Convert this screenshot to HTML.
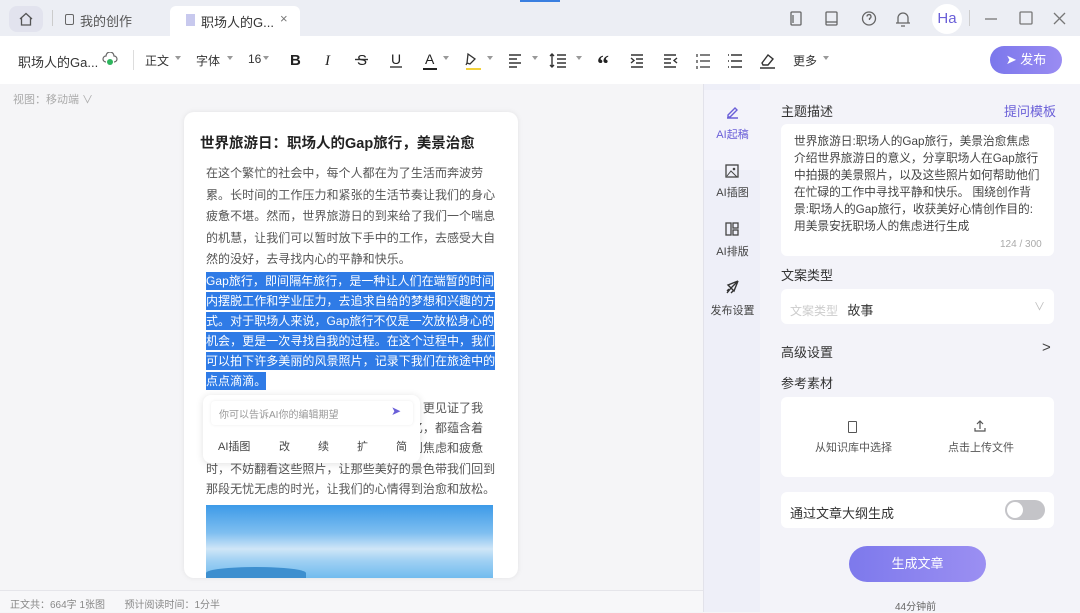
<!DOCTYPE html>
<html><head><meta charset="utf-8"><style>
*{margin:0;padding:0;box-sizing:border-box}
body{width:1080px;height:612px;overflow:hidden;font-family:"Liberation Sans","Noto Sans CJK SC",sans-serif;background:#f5f5f7;position:relative;color:#333}
.a{position:absolute}
.tabs{left:0;top:0;width:1080px;height:36px;background:#eceef4}
.tb{left:0;top:36px;width:1080px;height:48px;background:#fff}
.tb span{position:absolute;top:16px;font-size:12px;color:#333}
.dd{position:absolute;top:20px;width:0;height:0;border-left:3.5px solid transparent;border-right:3.5px solid transparent;border-top:4px solid #999}
.card{left:184px;top:112px;width:334px;height:466px;background:#fff;border-radius:10px;box-shadow:0 0 6px rgba(0,0,0,.08);overflow:hidden}
.p{position:absolute;left:22px;font-size:12px;color:#555;line-height:21.6px;letter-spacing:.05px;white-space:nowrap}
.sel span{background:#2f7be6;color:#fff;padding:2px 0}
.rside{left:703px;top:84px;width:57px;height:528px;background:#eeeff8;border-left:1px solid #e2e2ea}
.rp{left:760px;top:84px;width:320px;height:528px;background:#f3f3f9}
.box{background:#fff;border-radius:6px;position:absolute}
.lbl{position:absolute;font-size:13px;color:#333}
.ic{position:absolute;font-size:11px;color:#444;text-align:center;width:57px}
</style></head><body>
<div class="a tabs">
 <div class="a" style="left:9px;top:6px;width:34px;height:26px;background:#e2e3ee;border-radius:8px"></div>
 <svg class="a" style="left:18px;top:12px" width="16" height="14" viewBox="0 0 16 14"><path d="M2 7L8 1.5 14 7M3.5 6v7h9V6" fill="none" stroke="#555" stroke-width="1.3"/></svg>
 <div class="a" style="left:52px;top:10px;width:1px;height:16px;background:#ccc"></div>
 <div class="a" style="left:65px;top:14px;width:9px;height:11px;border:1.3px solid #666;border-radius:2px"></div>
 <div class="a" style="left:80px;top:11px;font-size:13px;color:#555">我的创作</div>
 <div class="a" style="left:170px;top:6px;width:130px;height:30px;background:#fff;border-radius:6px 6px 0 0"></div>
 <div class="a" style="left:186px;top:14px;width:9px;height:12px;background:#c8c9ee"></div>
 <div class="a" style="left:201px;top:12px;font-size:13px;color:#333">职场人的G...</div>
 <div class="a" style="left:280px;top:11px;font-size:13px;color:#777">×</div>
 <div class="a" style="left:520px;top:0;width:40px;height:2px;background:#3a7fe0"></div>
 <svg class="a" style="left:788px;top:10px" width="280" height="18" viewBox="0 0 280 18">
  <g fill="none" stroke="#666" stroke-width="1.3">
   <rect x="3" y="2" width="10" height="13" rx="1"/><path d="M5 5v8"/>
   <rect x="38" y="2" width="11" height="13" rx="1"/><path d="M38 12h11"/>
   <circle cx="81" cy="8.5" r="6.5"/><path d="M79 6.5a2 2 0 1 1 2.5 2v1.5"/>
   <path d="M110 13V8a5 5 0 0 1 10 0v5zM108 13h14M113 16h4"/>
   <path d="M197 9h12" stroke="#777"/><rect x="232" y="2" width="12" height="12" rx="1" stroke="#777"/><path d="M266 3l11 11M277 3l-11 11" stroke="#777"/>
  </g></svg>
 <div class="a" style="left:932px;top:4px;width:30px;height:30px;background:#fff;border-radius:50%;font-size:15px;color:#6a5fd8;text-align:center;line-height:30px">Ha</div>
 <div class="a" style="top:10px;width:1px;height:16px;background:#ccc;left:969px"></div>
</div>
<div class="a tb">
 <span style="left:18px;font-size:13px">职场人的Ga...</span>
 <svg class="a" style="left:102px;top:16px" width="16" height="14" viewBox="0 0 16 14"><path d="M4 10a3 3 0 0 1 0-6 4 4 0 0 1 8 0 3 3 0 0 1 0 6" fill="none" stroke="#666" stroke-width="1.2"/><circle cx="8" cy="10" r="3" fill="#2db55d"/></svg>
 <div class="a" style="left:133px;top:14px;width:1px;height:20px;background:#ddd"></div>
 <span style="left:145px">正文</span><i class="dd" style="left:175px"></i>
 <span style="left:196px">字体</span><i class="dd" style="left:227px"></i>
 <span style="left:248px">16</span><i class="dd" style="left:263px"></i>
 <svg class="a" style="left:0;top:0" width="860" height="48" viewBox="0 0 860 48" fill="none" stroke="#333" stroke-width="1.4">
  <text x="290" y="29" font-size="15" font-weight="bold" fill="#222" stroke="none" font-family="Liberation Sans">B</text>
  <text x="325" y="29" font-size="15" font-style="italic" fill="#222" stroke="none" font-family="Liberation Serif">I</text>
  <text x="357" y="29" font-size="15" fill="#222" stroke="none" font-family="Liberation Sans">S</text><path d="M355 23.5h13"/>
  <text x="391" y="28" font-size="14" fill="#222" stroke="none" font-family="Liberation Sans">U</text><path d="M390 31h12"/>
  <text x="425" y="28" font-size="14" fill="#222" stroke="none" font-family="Liberation Sans">A</text><path d="M423 33h14" stroke="#222" stroke-width="2"/>
  <path d="M468 18l7 5-5 5-3-1zM467 27l-1 2" stroke-width="1.3"/><path d="M466 33h15" stroke="#f2d13a" stroke-width="2"/>
  <path d="M509 19h12M509 23h8M509 27h12M509 31h8"/>
  <path d="M552 18v13M550 20l2-2 2 2M550 29l2 2 2-2M557 19h9M557 23h9M557 27h9M557 31h9"/>
  <text x="597" y="36" font-size="24" font-weight="bold" fill="#222" stroke="none" font-family="Liberation Serif">“</text>
  <path d="M631 19h12M636 23h7M636 27h7M631 31h12M631 22l3 2.5-3 2.5"/>
  <path d="M664 19h12M664 23h7M664 27h7M664 31h12M677 22l-3 2.5 3 2.5"/>
  <path d="M700 19h10M700 25h10M700 31h10M697 18v3M697 24v3M697 30v3" stroke-width="1.2"/>
  <path d="M731 19h11M731 25h11M731 31h11M728 19h1M728 25h1M728 31h1"/>
  <path d="M762 27l6-8 5 4-5 6h-5zM760 32h15"/>
 </svg>
 <i class="dd" style="left:443px"></i><i class="dd" style="left:487px"></i><i class="dd" style="left:532px"></i><i class="dd" style="left:576px"></i>
 <span style="left:793px">更多</span><i class="dd" style="left:823px"></i>
 <div class="a" style="left:990px;top:10px;width:72px;height:28px;border-radius:14px;background:linear-gradient(90deg,#7b77ec,#9a8cf2);color:#fff;font-size:13px;line-height:28px;text-align:center">➤ 发布</div>
</div>
<div class="a" style="left:13px;top:91px;font-size:11px;color:#aaa">视图：移动端 ∨</div>
<div class="a card">
 <div class="a" style="left:16px;top:20px;font-size:14.5px;font-weight:bold;color:#222">世界旅游日：职场人的Gap旅行，美景治愈</div>
 <div class="p" style="top:51px">在这个繁忙的社会中，每个人都在为了生活而奔波劳<br>累。长时间的工作压力和紧张的生活节奏让我们的身心<br>疲惫不堪。然而，世界旅游日的到来给了我们一个喘息<br>的机慧，让我们可以暂时放下手中的工作，去感受大自<br>然的没好，去寻找内心的平静和快乐。</div>
 <div class="p sel" style="top:159px;line-height:20px"><span>Gap旅行，即间隔年旅行，是一种让人们在端暂的时间</span><br><span>内摆脱工作和学业压力，去追求自给的梦想和兴趣的方</span><br><span>式。对于职场人来说，Gap旅行不仅是一次放松身心的</span><br><span>机会，更是一次寻找自我的过程。在这个过程中，我们</span><br><span>可以拍下许多美丽的风景照片，记录下我们在旅途中的</span><br><span>点点滴滴。</span></div>
 <div class="p" style="top:286px;line-height:20.2px">旅行中拍下的美景照片，不仅仅是风景，更见证了我<br>们的成长和变化。每一张照片背后的回忆，都蕴含着<br>我们对生活的感悟。当我们在工作中感到焦虑和疲惫<br>时，不妨翻看这些照片，让那些美好的景色带我们回到<br>那段无忧无虑的时光，让我们的心情得到治愈和放松。</div>
 <div class="a" style="left:22px;top:393px;width:287px;height:80px;background:linear-gradient(180deg,#3d9ae8 0%,#7fbff0 35%,#cfe6f7 55%,#9fd0f3 70%,#5fb3ec 100%)"></div>
 <div class="a" style="left:22px;top:455px;width:100px;height:12px;background:#3d8fcf;border-radius:50% 50% 0 0"></div>
</div>
<div class="a" style="left:203px;top:395px;width:217px;height:68px;background:#fff;border-radius:8px;box-shadow:0 1px 8px rgba(0,0,0,.12)">
 <div class="a" style="left:8px;top:6px;width:202px;height:24px;border-radius:4px;background:#fff;box-shadow:0 0 3px rgba(0,0,0,.08)"></div>
 <div class="a" style="left:16px;top:11px;font-size:10px;color:#999">你可以告诉AI你的编辑期望</div>
 <div class="a" style="left:188px;top:9px;font-size:12px;color:#6a5fd8">➤</div>
 <div class="a" style="left:15px;top:43px;font-size:11px;color:#444">AI插图</div>
 <div class="a" style="left:76px;top:43px;font-size:11px;color:#444">改</div>
 <div class="a" style="left:115px;top:43px;font-size:11px;color:#444">续</div>
 <div class="a" style="left:154px;top:43px;font-size:11px;color:#444">扩</div>
 <div class="a" style="left:193px;top:43px;font-size:11px;color:#444">简</div>
</div>
<div class="a" style="left:0;top:590px;width:703px;height:22px;background:#f7f7f9;border-top:1px solid #e5e5ea"></div>
<div class="a" style="left:10px;top:596px;font-size:10px;color:#888">正文共：664字 1张图 &nbsp; &nbsp; &nbsp; 预计阅读时间：1分半</div>
<div class="a rside">
 <div class="a" style="left:0;top:6px;width:56px;height:80px;background:#f3f3fa"></div>
 <svg class="a" style="left:21px;top:21px" width="14" height="14" fill="none" stroke="#6a5fd8" stroke-width="1.4"><path d="M3 10l7-7 2 2-7 7H3zM2 13h11"/></svg>
 <div class="ic" style="top:42px;color:#6a5fd8">AI起稿</div>
 <svg class="a" style="left:21px;top:80px" width="14" height="14"><rect x="1" y="1" width="12" height="12" fill="none" stroke="#444" stroke-width="1.3"/><path d="M2 12l4-5 6 6" fill="none" stroke="#444"/><circle cx="9" cy="5" r="1.3" fill="#444"/></svg>
 <div class="ic" style="top:100px">AI插图</div>
 <svg class="a" style="left:21px;top:138px" width="14" height="14" fill="none" stroke="#444" stroke-width="1.3"><rect x="1" y="1" width="5" height="12"/><rect x="8" y="1" width="5" height="5"/><rect x="8" y="8" width="5" height="5"/></svg>
 <div class="ic" style="top:159px">AI排版</div>
 <svg class="a" style="left:21px;top:196px" width="14" height="14" fill="none" stroke="#333" stroke-width="1.4"><path d="M13 1L3 5l3 3zM13 1l-4 10-3-3zM6 8l-4 5M4 9l-2 2M8 11l-2 2"/></svg>
 <div class="ic" style="top:218px">发布设置</div>
</div>
<div class="a rp">
 <div class="lbl" style="left:21px;top:17px">主题描述</div>
 <div class="lbl" style="left:244px;top:17px;color:#6a5fd8">提问模板</div>
 <div class="box" style="left:21px;top:40px;width:273px;height:132px"></div>
 <div class="a" style="left:34px;top:49px;font-size:11.7px;line-height:17px;color:#444;white-space:nowrap">世界旅游日:职场人的Gap旅行，美景治愈焦虑<br>介绍世界旅游日的意义，分享职场人在Gap旅行<br>中拍摄的美景照片，以及这些照片如何帮助他们<br>在忙碌的工作中寻找平静和快乐。 围绕创作背<br>景:职场人的Gap旅行，收获美好心情创作目的:<br>用美景安抚职场人的焦虑进行生成</div>
 <div class="a" style="left:240px;top:155px;font-size:10px;color:#aaa">124 / 300</div>
 <div class="lbl" style="left:21px;top:181px">文案类型</div>
 <div class="box" style="left:21px;top:205px;width:273px;height:35px"></div>
 <div class="a" style="left:30px;top:216px;font-size:12px;color:#ccc">文案类型 <span style="color:#333;font-size:13px;margin-left:6px">故事</span></div>
 <div class="a" style="left:274px;top:214px;font-size:11px;color:#bbb">∨</div>
 <div class="lbl" style="left:21px;top:258px">高级设置</div>
 <div class="a" style="left:282px;top:255px;font-size:15px;color:#444">&gt;</div>
 <div class="lbl" style="left:21px;top:289px">参考素材</div>
 <div class="box" style="left:21px;top:313px;width:273px;height:80px"></div>
 <div class="a" style="left:88px;top:337px;width:9px;height:12px;border:1.2px solid #555;border-radius:1px"></div>
 <div class="a" style="left:55px;top:355px;font-size:11px;color:#555">从知识库中选择</div>
 <svg class="a" style="left:214px;top:336px" width="12" height="12" fill="none" stroke="#555" stroke-width="1.2"><path d="M6 9V1M3 4l3-3 3 3M1 8v3h10V8"/></svg>
 <div class="a" style="left:188px;top:355px;font-size:11px;color:#555">点击上传文件</div>
 <div class="box" style="left:21px;top:408px;width:273px;height:36px"></div>
 <div class="a" style="left:30px;top:419px;font-size:13px;color:#333">通过文章大纲生成</div>
 <div class="a" style="left:245px;top:416px;width:40px;height:20px;border-radius:10px;background:#c4c4c8"></div>
 <div class="a" style="left:247px;top:418px;width:16px;height:16px;border-radius:50%;background:#fff"></div>
 <div class="a" style="left:89px;top:462px;width:137px;height:36px;border-radius:18px;background:linear-gradient(90deg,#7d79ec,#9b8ff2);color:#fff;text-align:center;line-height:36px;font-size:13px">生成文章</div>
 <div class="a" style="left:135px;top:514px;font-size:10px;color:#666">44分钟前</div>
</div>
</body></html>
